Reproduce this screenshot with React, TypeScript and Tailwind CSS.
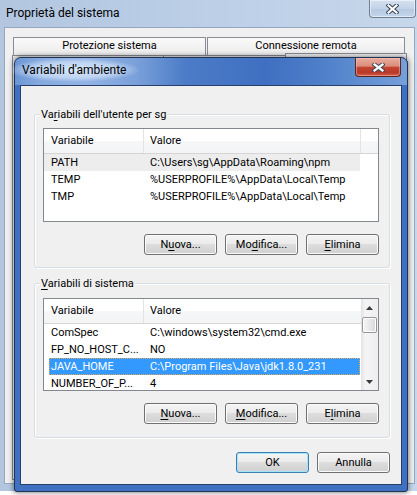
import React from "react";

const U = ({ children }: { children: React.ReactNode }) => (
  <span className="underline underline-offset-[2px] decoration-[1px]">{children}</span>
);

function Btn({ children, def }: { children: React.ReactNode; def?: boolean }) {
  return (
    <div
      className={`flex h-[21px] w-[73px] items-center justify-center rounded-[3px] border text-[11px] leading-[13px] text-black bg-[linear-gradient(to_bottom,#f4f4f4_0%,#ececec_45%,#dddddd_50%,#d0d0d0_100%)] ${
        def
          ? "border-[#3c7fb1] shadow-[inset_0_0_0_1px_#a5e3fb]"
          : "border-[#707070] shadow-[inset_0_0_0_1px_#fbfbfb]"
      }`}
    >
      <span>{children}</span>
    </div>
  );
}

function Row({ a, b, kind }: { a: string; b: string; kind?: "gray" | "sel" }) {
  if (kind === "sel") {
    return (
      <div className="ml-[5px] flex h-[17px] w-[311px] shrink-0 border border-dotted border-[#e0a45a] bg-[#3399ff] leading-[15px] text-white">
        <div className="w-[94px] whitespace-nowrap pl-[1px]">{a}</div>
        <div className="whitespace-nowrap pl-[6px]">{b}</div>
      </div>
    );
  }
  return (
    <div
      className={`flex h-[17px] w-[316px] shrink-0 leading-[17px] text-black ${
        kind === "gray" ? "bg-[#ededed]" : ""
      }`}
    >
      <div className="w-[100px] whitespace-nowrap pl-[7px]">{a}</div>
      <div className="whitespace-nowrap pl-[6px]">{b}</div>
    </div>
  );
}

function Header({ filler }: { filler: boolean }) {
  return (
    <div className="flex h-[25px] shrink-0 border-b border-[#d5d5d5] bg-[linear-gradient(to_bottom,#ffffff_0%,#ffffff_50%,#f6f7f9_51%,#f3f4f6_100%)] text-black">
      <div className="flex w-[100px] items-center border-r border-[#e3e3e3] pl-[7px] pt-[1px]">Variabile</div>
      <div
        className={`flex items-center pl-[6px] pt-[1px] ${
          filler ? "w-[217px] border-r border-[#e3e3e3]" : "flex-1"
        }`}
      >
        Valore
      </div>
      {filler && <div className="flex-1" />}
    </div>
  );
}

function Tri({ down }: { down?: boolean }) {
  return (
    <svg width="7" height="4" viewBox="0 0 7 4">
      <path d={down ? "M0 0 L7 0 L3.5 4 Z" : "M3.5 0 L7 4 L0 4 Z"} fill="#3a3a3a" />
    </svg>
  );
}

function CloseX({ w, h }: { w: number; h: number }) {
  return (
    <svg width={w} height={h} viewBox={`0 0 ${w} ${h}`}>
      <path
        d={`M2.5 1.5 L${w - 2.5} ${h - 1.5} M${w - 2.5} 1.5 L2.5 ${h - 1.5}`}
        stroke="#3b4657"
        strokeWidth="4.2"
        strokeLinecap="square"
      />
      <path
        d={`M2.5 1.5 L${w - 2.5} ${h - 1.5} M${w - 2.5} 1.5 L2.5 ${h - 1.5}`}
        stroke="#ffffff"
        strokeWidth="2.2"
        strokeLinecap="square"
      />
    </svg>
  );
}

export default function App() {
  return (
    <div className="relative h-[495px] w-[417px] overflow-hidden bg-white font-['Roboto',sans-serif] text-[11px]">
      {/* Background window: Proprietà del sistema */}
      <div className="flex h-[491px] w-[425px] flex-col bg-[linear-gradient(to_right,#b2c6e0,#bccfe7_50%,#c7d7eb)]">
        <div className="flex h-[27px] shrink-0 items-start justify-between">
          <div className="self-center pl-[6px] pb-[1px] text-[12px] leading-[16px] text-black">
            Proprietà del sistema
          </div>
          <div className="mr-[9px] flex h-[18px] w-[47px] items-center justify-center rounded-b-[4px] border border-t-0 border-[#6f7f98] bg-[linear-gradient(to_bottom,#d6e1ef,#c3d3e8_50%,#b6c9e1_51%,#c4d5ea)] shadow-[inset_0_0_0_1px_rgba(255,255,255,0.5)]">
            <CloseX w={13} h={10} />
          </div>
        </div>
        <div className="flex flex-1 pb-[7px]">
          <div className="w-[4px]" />
          <div className="flex w-[411px] flex-col border border-[#96a7bf] bg-[#f0f0f0] pl-[7px] pt-[9px] pb-[3px]">
            <div className="ml-[1px] flex h-[18px] shrink-0 gap-[1px]">
              <div className="flex w-[193px] items-center justify-center border border-b-0 border-[#898c95] bg-[linear-gradient(to_bottom,#fafafa,#ebebeb)] text-black">
                Protezione sistema
              </div>
              <div className="flex w-[198px] items-center justify-center border border-b-0 border-[#898c95] bg-[linear-gradient(to_bottom,#fafafa,#ebebeb)] text-black">
                Connessione remota
              </div>
            </div>
            <div className="flex h-[6px] shrink-0">
              <div className="w-[151px] border-l border-t border-[#898c95]" />
              <div className="w-[122px] border-l border-t border-[#898c95]" />
              <div className="-mt-[2px] h-[8px] w-[122px] border-x border-t border-[#898c95] bg-[#f5f5f5]" />
            </div>
            <div className="w-[396px] flex-1 border-x border-b border-[#898c95] bg-white" />
          </div>
        </div>
      </div>

      {/* Foreground dialog: Variabili d'ambiente */}
      <div className="absolute left-[14px] top-[57px] flex h-[435px] w-[394px] flex-col rounded-t-[7px] rounded-b-[3px] border border-[#1f3356] bg-[#3f70c1] shadow-[0_0_5px_1px_rgba(0,0,0,0.45)]">
        <div className="flex h-[27px] shrink-0 items-start justify-between rounded-t-[6px] bg-[linear-gradient(to_right,#6b96d4_0px,#86aadf_25px,#93b4e4_70px,#7ba1da_120px,#4c7cc7_170px,#3f6fc1_250px,#4f80c9_310px,#77a0da_392px)]">
          <div className="self-center pl-[7px] pb-[1px]">
            <span className="-ml-[14px] px-[14px] py-[5px] text-[12px] leading-[16px] text-black bg-[radial-gradient(closest-side,rgba(220,234,252,0.95),rgba(210,226,248,0.7)_65%,rgba(200,220,246,0))]">
              Variabili d'ambiente
            </span>
          </div>
          <div className="mr-[6px] flex h-[19px] w-[46px] items-center justify-center rounded-b-[4px] border border-t-0 border-[#5a2620] bg-[linear-gradient(to_bottom,#e8ad9e_0%,#dc8c7b_45%,#c3452f_52%,#b9392a_80%,#d25e44_100%)] shadow-[inset_0_0_0_1px_rgba(255,200,190,0.45)]">
            <CloseX w={13} h={9} />
          </div>
        </div>
        <div className="mx-[5px] flex h-[400px] shrink-0 flex-col border border-[#27406a] bg-[#f0f0f0]">
          {/* Group 1 */}
          <div className="relative ml-[13px] mt-[28px] flex h-[154px] w-[356px] shrink-0 flex-col rounded-[3px] border border-[#d5dfe5] pl-[8px] pt-[13px] shadow-[inset_1px_1px_0_#ffffff,1px_1px_0_#ffffff]">
            <span className="absolute -top-[8px] left-[5px] bg-[#f0f0f0] px-[1px] leading-[15px] text-black">
              Va<U>r</U>iabili dell'utente per sg
            </span>
            <div className="flex h-[94px] w-[336px] shrink-0 flex-col overflow-hidden border border-[#828790] bg-white">
              <Header filler />
              <Row a="PATH" b="C:\Users\sg\AppData\Roaming\npm" kind="gray" />
              <Row a="TEMP" b="%USERPROFILE%\AppData\Local\Temp" />
              <Row a="TMP" b="%USERPROFILE%\AppData\Local\Temp" />
            </div>
            <div className="mt-[12px] flex w-[336px] justify-end gap-[8px]">
              <Btn>
                N<U>u</U>ova...
              </Btn>
              <Btn>
                Mo<U>d</U>ifica...
              </Btn>
              <Btn>
                <U>E</U>limina
              </Btn>
            </div>
          </div>

          {/* Group 2 */}
          <div className="relative ml-[13px] mt-[15px] flex h-[155px] w-[356px] shrink-0 flex-col rounded-[3px] border border-[#d5dfe5] pl-[8px] pt-[14px] shadow-[inset_1px_1px_0_#ffffff,1px_1px_0_#ffffff]">
            <span className="absolute -top-[8px] left-[5px] bg-[#f0f0f0] px-[1px] leading-[15px] text-black">
              <U>V</U>ariabili di sistema
            </span>
            <div className="flex h-[93px] w-[336px] shrink-0 overflow-hidden border border-[#828790] bg-white">
              <div className="flex w-[317px] flex-col overflow-hidden">
                <Header filler={false} />
                <Row a="ComSpec" b="C:\windows\system32\cmd.exe" />
                <Row a="FP_NO_HOST_C..." b="NO" />
                <Row a="JAVA_HOME" b="C:\Program Files\Java\jdk1.8.0_231" kind="sel" />
                <Row a="NUMBER_OF_P..." b="4" />
              </div>
              <div className="flex w-[17px] flex-col bg-[linear-gradient(to_right,#e3e3e3,#f4f4f4_25%,#eeeeee)]">
                <div className="flex h-[17px] items-center justify-center">
                  <Tri />
                </div>
                <div className="mx-[1px] mt-[1px] h-[16px] rounded-[2px] border border-[#979797] bg-[linear-gradient(to_right,#f7f7f7,#e8e8e8_50%,#d8d8d8)] shadow-[inset_0_0_0_1px_#ffffff]" />
                <div className="flex-1" />
                <div className="flex h-[17px] items-center justify-center">
                  <Tri down />
                </div>
              </div>
            </div>
            <div className="mt-[12px] flex w-[336px] justify-end gap-[8px]">
              <Btn>
                <U>N</U>uova...
              </Btn>
              <Btn>
                <U>M</U>odifica...
              </Btn>
              <Btn>
                E<U>l</U>imina
              </Btn>
            </div>
          </div>

          <div className="ml-[13px] mt-[14px] flex w-[356px] justify-end gap-[8px]">
            <Btn def>OK</Btn>
            <Btn>Annulla</Btn>
          </div>
        </div>
      </div>
    </div>
  );
}
